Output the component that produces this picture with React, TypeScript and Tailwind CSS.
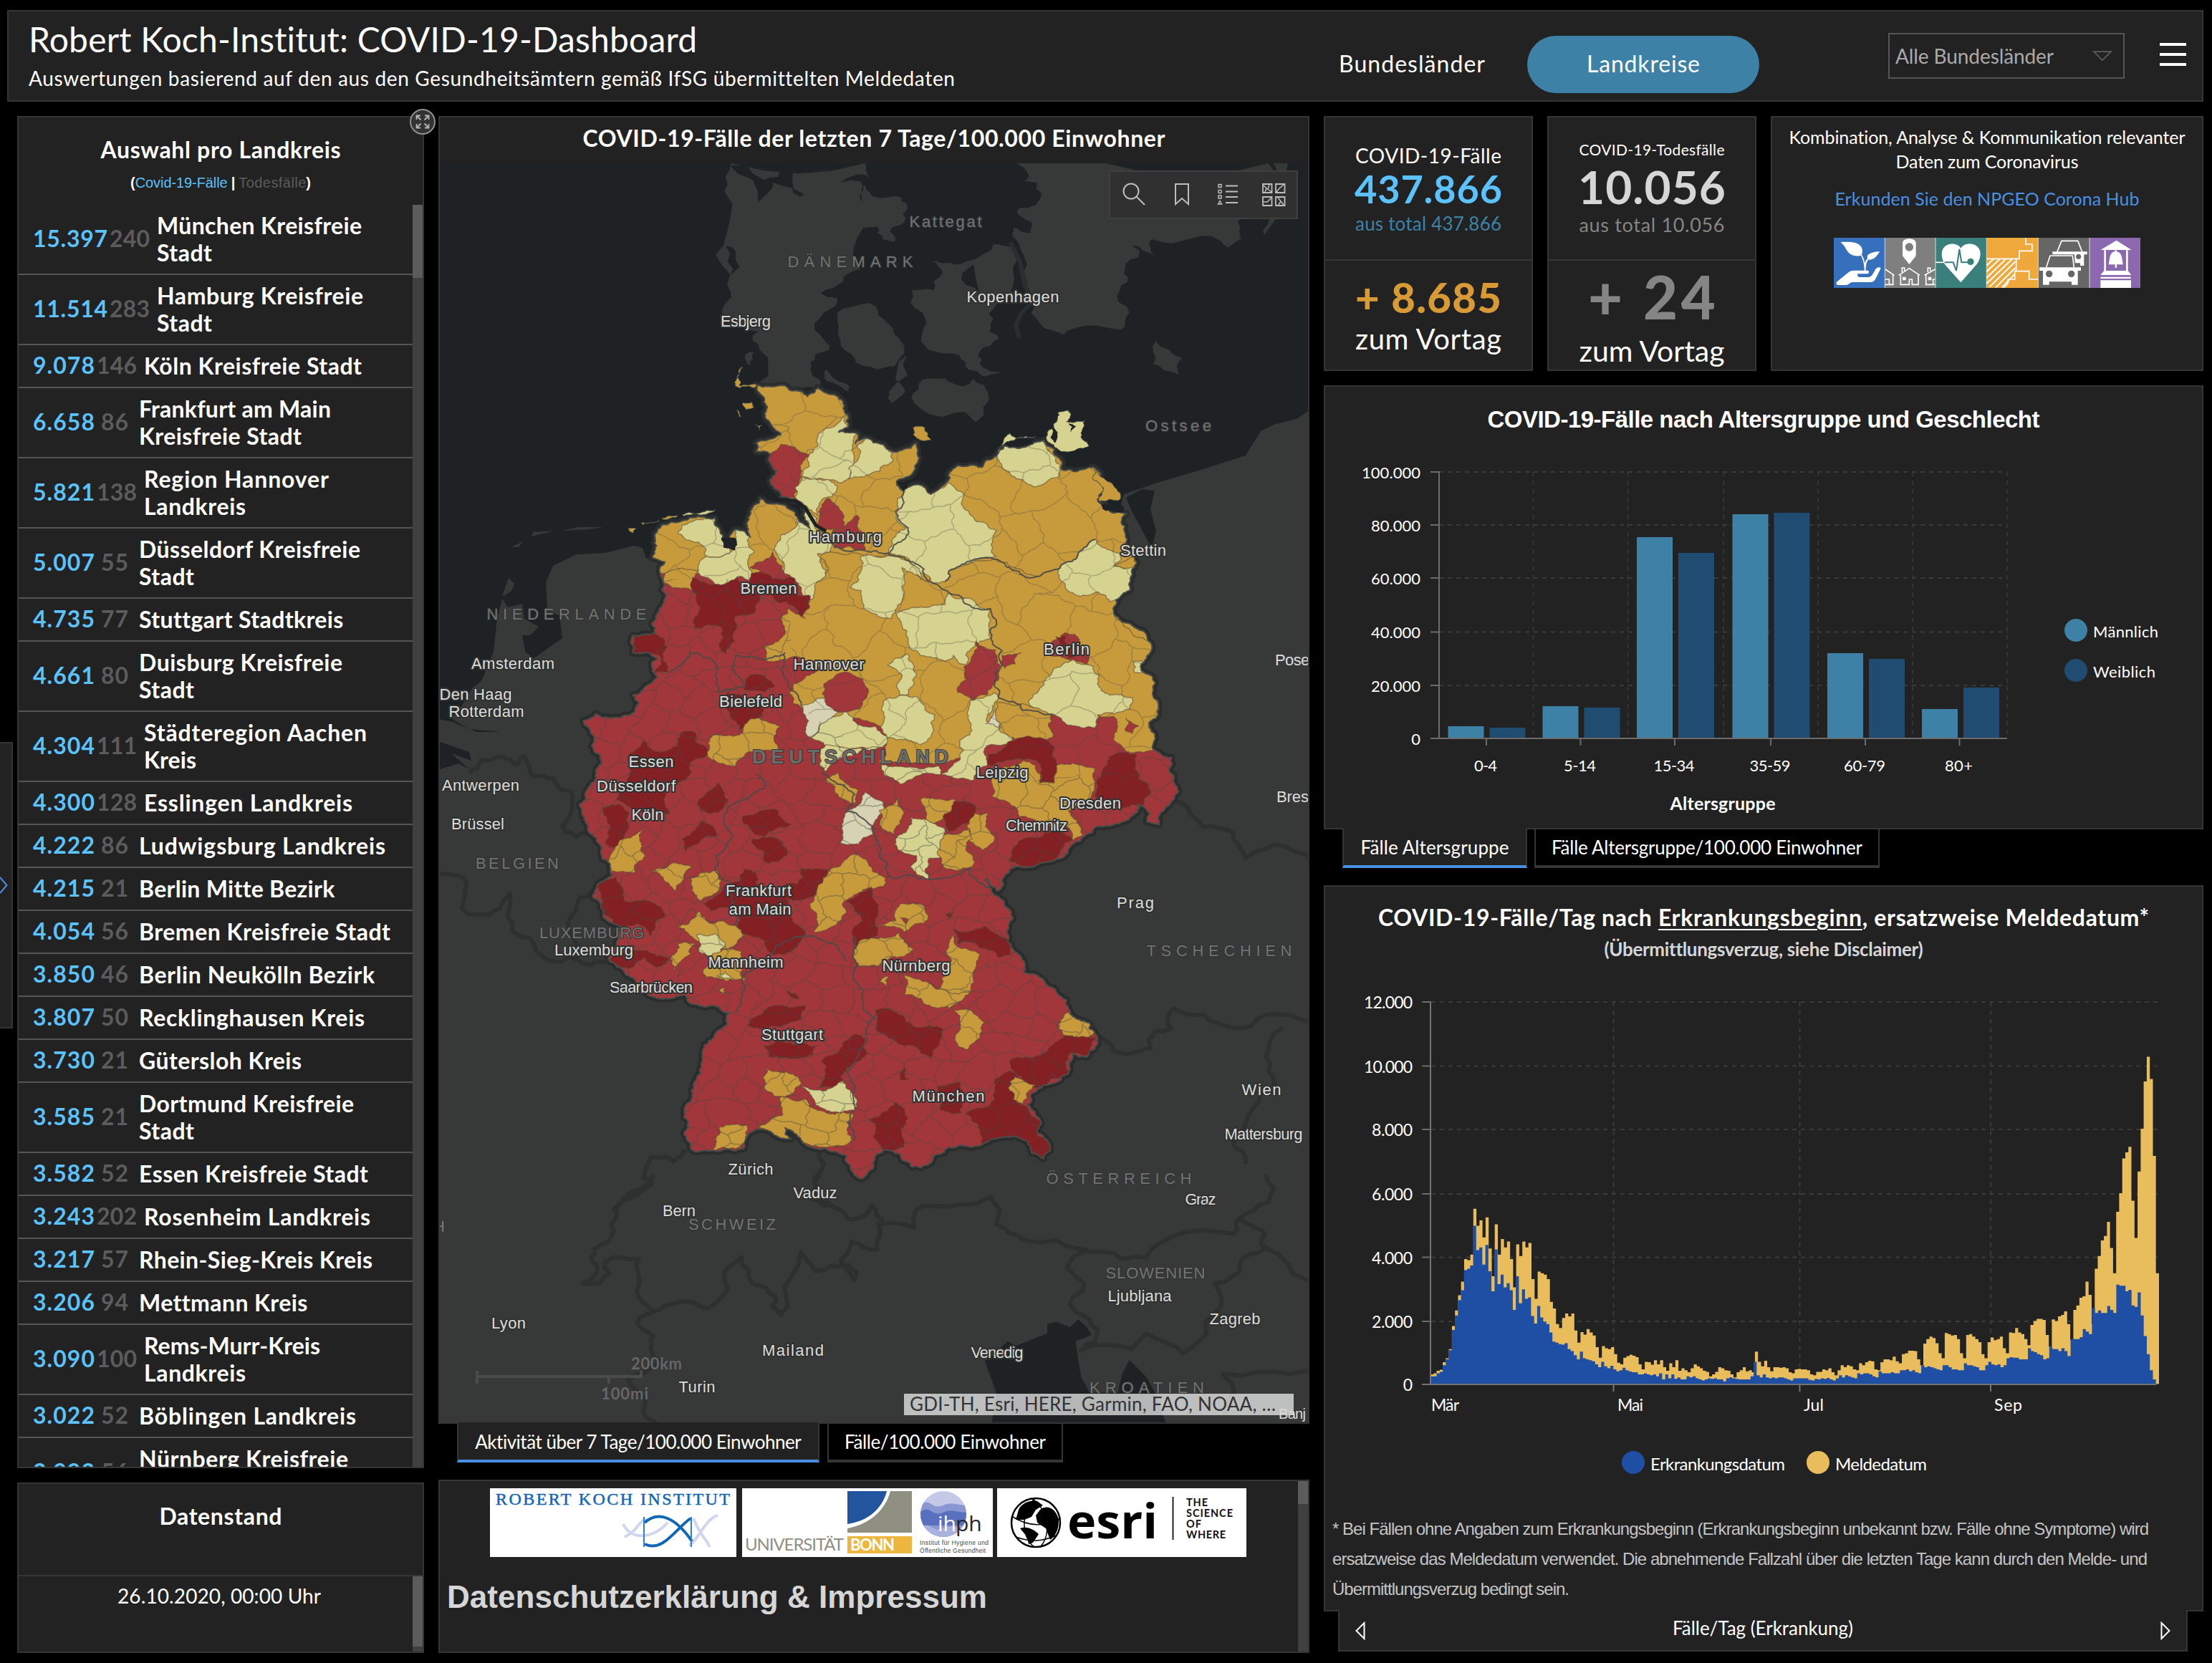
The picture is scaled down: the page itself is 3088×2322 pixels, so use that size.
import { useLayoutEffect, useRef, type ReactNode } from "react";

/* ---------- text helpers ---------- */

// Spreads a single line of text evenly over a given width.
function Line({ w, className = "", children }: { w: number; className?: string; children: ReactNode }) {
  const ref = useRef<HTMLSpanElement>(null);
  useLayoutEffect(() => {
    const el = ref.current;
    if (!el) return;
    el.style.letterSpacing = "0px";
    el.style.marginRight = "0px";
    const n = (el.textContent || "").length;
    const step = (w - el.getBoundingClientRect().width) / Math.max(1, n - 1);
    el.style.letterSpacing = `${step}px`;
    el.style.marginRight = `${-step}px`;
  }, [w]);
  return (
    <span ref={ref} className={`inline-block whitespace-nowrap ${className}`}>
      {children}
    </span>
  );
}

/* ---------- left list ---------- */

type Row = [string, string, [string, number][]];
const rows: Row[] = [
  ["15.397", "240", [["München Kreisfreie", 286], ["Stadt", 77]]],
  ["11.514", "283", [["Hamburg Kreisfreie", 288], ["Stadt", 77]]],
  ["9.078", "146", [["Köln Kreisfreie Stadt", 304]]],
  ["6.658", "86", [["Frankfurt am Main", 268], ["Kreisfreie Stadt", 227]]],
  ["5.821", "138", [["Region Hannover", 258], ["Landkreis", 142]]],
  ["5.007", "55", [["Düsseldorf Kreisfreie", 309], ["Stadt", 77]]],
  ["4.735", "77", [["Stuttgart Stadtkreis", 284]]],
  ["4.661", "80", [["Duisburg Kreisfreie", 284], ["Stadt", 77]]],
  ["4.304", "111", [["Städteregion Aachen", 311], ["Kreis", 73]]],
  ["4.300", "128", [["Esslingen Landkreis", 291]]],
  ["4.222", "86", [["Ludwigsburg Landkreis", 344]]],
  ["4.215", "21", [["Berlin Mitte Bezirk", 272]]],
  ["4.054", "56", [["Bremen Kreisfreie Stadt", 351]]],
  ["3.850", "46", [["Berlin Neukölln Bezirk", 329]]],
  ["3.807", "50", [["Recklinghausen Kreis", 315]]],
  ["3.730", "21", [["Gütersloh Kreis", 227]]],
  ["3.585", "21", [["Dortmund Kreisfreie", 300], ["Stadt", 77]]],
  ["3.582", "52", [["Essen Kreisfreie Stadt", 320]]],
  ["3.243", "202", [["Rosenheim Landkreis", 316]]],
  ["3.217", "57", [["Rhein-Sieg-Kreis Kreis", 326]]],
  ["3.206", "94", [["Mettmann Kreis", 234]]],
  ["3.090", "100", [["Rems-Murr-Kreis", 246], ["Landkreis", 142]]],
  ["3.022", "52", [["Böblingen Landkreis", 303]]],
  ["2.993", "56", [["Nürnberg Kreisfreie", 292], ["Stadt", 77]]],
];

function ListRow({ row }: { row: Row }) {
  const [cases, deaths, name] = row;
  const long = cases.length > 5;
  const three = deaths.length > 2;
  return (
    <li className="flex items-center border-b-2 border-[#555] py-[10px] pl-[20px] text-[32px] leading-[38px] font-bold">
      <span className="-my-[2px] flex pb-[2px]">
        <Line w={long ? 104 : 86} className="text-[#5bc2fb]">{cases}</Line>
        <span className={three ? "ml-[3px] flex" : "ml-[9px] flex"}>
          <Line w={three ? 56 : 38} className="text-[#5c5c5c]">{deaths}</Line>
        </span>
      </span>
      <span className={three ? "ml-[10px] flex flex-col items-start" : "ml-[15px] flex flex-col items-start"}>
        {name.map(([t, w]) => (
          <Line key={t} w={w}>{t}</Line>
        ))}
      </span>
    </li>
  );
}

/* ---------- map ---------- */

type Pt = [number, number];
const parse = (s: string, dy = 0): Pt[] => s.trim().split(/\s+/).map((p) => {
  const [x, y] = p.split(",").map(Number);
  return [x, y + dy];
});

const noise = (a: number, b: number) => {
  const v = Math.sin(a * 12.9898 + b * 78.233) * 43758.5453;
  return v - Math.floor(v) - 0.5;
};

// Midpoint displacement gives straight segments a coastline-like look.
function jag(a: Pt, b: Pt, depth: number): Pt[] {
  const dx = b[0] - a[0];
  const dy = b[1] - a[1];
  if (depth === 0 || Math.hypot(dx, dy) < 9) return [a];
  const k = noise(a[0] + b[0], a[1] + b[1]) * 0.36 * (a[0] + a[1] < b[0] + b[1] ? 1 : -1);
  const m: Pt = [(a[0] + b[0]) / 2 - dy * k, (a[1] + b[1]) / 2 + dx * k];
  return [...jag(a, m, depth - 1), ...jag(m, b, depth - 1)];
}

const toPath = (out: Pt[], closed: boolean) =>
  "M" + out.map((p) => `${p[0].toFixed(1)},${p[1].toFixed(1)}`).join("L") + (closed ? "Z" : "");

function shape(pts: Pt[], closed = true, depth = 4) {
  const out: Pt[] = [];
  const n = closed ? pts.length : pts.length - 1;
  for (let i = 0; i < n; i++) out.push(...jag(pts[i], pts[(i + 1) % pts.length], depth));
  if (!closed) out.push(pts[pts.length - 1]);
  return toPath(out, closed);
}

const SOUTH = 1467;

const germany: Pt[] = [
  ...parse("480,95 550,97 560,112 590,118 605,135 630,105 690,150 695,190 703,200 703,245 680,262 725,265 722,300 745,282 790,305 812,330 835,325 870,300 873,370 845,420 822,435 838,470 850,455 885,450 905,480 930,455 960,390 1030,385 1065,345 1085,310 1180,290 1220,360 1225,395 1260,400 1300,385 1320,440 1310,500 1345,545 1380,550 1385,670 1400,700 1400,740 1390,820 1355,855 1350,900 1400,950 1435,1000 1430,1060 1415,1090 1445,1130 1447,1200 1435,1290 1450,1330 1450,1385 1490,1410 1497,1480"),
  ...parse("1490,100 1460,180 1430,170 1425,120 1410,110 1395,150 1350,180 1280,220 1250,250 1200,310 1150,330 1100,335 1080,370 1065,415 1040,370 1060,430 1105,510 1090,560 1105,620 1130,700 1180,730 1240,830 1290,880 1305,920 1305,970 1285,1000 1250,990 1240,1060 1180,1100 1150,1130 1140,1170 1170,1220 1165,1270 1190,1300 1180,1360 1150,1340 1140,1300 1080,1285 1030,1310 950,1320 900,1380 860,1390 830,1345 790,1330 770,1350 765,1395 740,1430 700,1350 650,1325 590,1295 550,1250 565,1290 520,1270 480,1255 455,1290 450,1325 370,1332 330,1335 310,1290 315,1230 320,1160 335,1080 350,980 385,910 415,845 380,820 330,815 305,780 270,795 235,790 190,740 160,700 125,665 140,610 150,540 110,510 85,440 95,390 130,360 125,330 105,300 100,250 75,210 65,170 50,110 65,93", SOUTH),
  ...parse("80,1500 90,1460 100,1400 80,1370 75,1310 60,1280 90,1255 130,1270 185,1250 195,1220 180,1190 240,1125 230,1110 240,1060 220,1040 180,1040 180,980 235,970 240,900 258,850 258,720 228,705 235,620 250,590 300,575 380,565 390,600 400,640 420,660 430,605 465,630 462,560 490,495 520,515 575,545 610,600 600,540 580,505 540,490 515,440 530,400 515,370 515,340 480,330 480,300 540,270 510,220 500,150"),
];

const ORANGE = "#c79b3c";
const YELLOW = "#d6d28f";
const RED = "#a1373b";
const DARK = "#822024";
const BEIGE = "#d7d2b4";
const SEA = "#1e2225";

const north: [string, string][] = [
  [RED, "540,305 575,315 610,345 590,420 575,495 540,490 515,440 530,400 515,370 515,340"],
  [YELLOW, "630,280 665,245 700,200 703,245 680,262 725,265 715,320 720,390 690,440 640,425 590,415 610,340 630,310"],
  [YELLOW, "745,282 790,305 812,335 812,365 780,400 740,420 705,425 705,390 720,370 725,310"],
  [YELLOW, "590,420 670,440 665,490 640,500 630,555 600,520 575,490"],
  [YELLOW, "545,505 580,500 600,530 630,610 665,660 640,700 650,770 640,860 610,860 590,810 545,760 530,690 540,625 575,600 583,560"],
  [RED, "635,560 655,495 690,545 695,600 640,610"],
  [RED, "665,610 725,555 732,610 745,680 670,670"],
  [YELLOW, "290,620 300,590 350,570 385,565 400,640 415,690 360,700 340,650"],
  [YELLOW, "360,700 415,690 430,605 465,630 462,740 480,790 440,770 395,805 340,760"],
  [ORANGE, "258,760 340,750 325,820 258,795"],
  [ORANGE, "630,690 795,695 850,720 900,790 1060,710 1170,770 1215,745 1400,700 1390,820 1355,855 1350,900 1435,1000 1430,1060 1415,1090 1445,1130 1447,1200 1435,1290 1450,1380 1380,1390 1350,1350 1350,1265 1200,1260 1200,1340 1070,1320 960,1420 860,1430 780,1430 780,1300 740,1280 570,1220 570,1150 640,1100 590,1060 500,1065 500,1020 550,960 560,880 600,920 610,860 650,770"],
  [YELLOW, "1065,345 1085,310 1180,290 1220,380 1215,420 1155,455 1130,430 1080,390"],
  [YELLOW, "825,495 850,455 885,450 905,480 950,440 985,480 985,530 1065,610 1065,700 1025,705 950,750 940,790 905,790 840,700 800,690 810,650 845,600 820,540"],
  [YELLOW, "735,700 830,705 880,780 835,740 840,780 835,860 810,920 760,900 735,820 710,810 735,750"],
  [YELLOW, "820,900 860,880 940,870 945,830 1050,890 1050,990 1010,1020 990,1085 960,1050 940,1070 880,1050 850,990"],
  [RED, "1015,1000 1062,1030 1060,1150 1005,1210 970,1180 985,1090"],
  [RED, "1078,1050 1125,1040 1110,1080 1085,1095"],
  [RED, "1200,1000 1230,970 1255,975 1290,1050 1285,1080 1240,1065 1195,1050"],
  [DARK, "1210,985 1232,980 1235,1010 1260,1050 1240,1060 1220,1010"],
  [YELLOW, "1215,745 1270,680 1305,640 1365,690 1350,735 1400,740 1390,820 1340,860 1310,825 1255,835 1225,790"],
  [YELLOW, "1175,1160 1205,1095 1250,1065 1300,1090 1310,1150 1340,1190 1395,1200 1390,1240 1310,1260 1305,1305 1260,1300 1200,1255 1145,1225"],
  [YELLOW, "1400,1070 1420,1070 1420,1110 1400,1110"],
  [RED, "1380,1270 1395,1290 1410,1300 1395,1325 1378,1315"],
  [YELLOW, "800,1200 870,1195 890,1240 915,1260 910,1320 880,1365 800,1340 790,1260"],
  [YELLOW, "610,1340 640,1290 700,1240 725,1290 770,1300 800,1350 780,1375 650,1370"],
  [YELLOW, "650,1365 780,1375 720,1400 650,1460 635,1440"],
  [BEIGE, "595,1225 630,1200 680,1250 640,1290 610,1340"],
  [RED, "645,1150 690,1110 740,1135 730,1240 680,1250 650,1220"],
  [YELLOW, "800,1085 850,1045 870,1120 850,1190 830,1190 835,1120"],
  [YELLOW, "1000,1210 1060,1180 1070,1200 1040,1280 1105,1350 1040,1370 1040,1440 1010,1490 930,1470 975,1420 975,1350 1000,1330 995,1270"],
  [BEIGE, "1055,1225 1070,1305 1040,1290"],
  [ORANGE, "1065,1215 1140,1225 1200,1260 1200,1340 1110,1345 1070,1310"],
  [YELLOW, "785,1435 860,1445 925,1440 930,1470 830,1505 790,1470"],
  [DARK, "1045,1400 1110,1350 1170,1340 1205,1370 1205,1500 1170,1500 1160,1420 1100,1420 1050,1440"],
  [ORANGE, "1050,1480 1130,1420 1160,1440 1170,1500 1205,1500 1210,1440 1250,1430 1305,1450 1300,1530 1240,1600 1275,1685 1250,1705 1230,1650 1120,1620 1100,1580 1055,1550"],
  [DARK, "1305,1500 1350,1400 1405,1400 1410,1480 1440,1530 1420,1580 1370,1590 1310,1570"],
  [DARK, "325,775 385,800 435,770 490,850 480,890 430,910 430,1000 405,1045 390,1020 395,950 330,955 345,880"],
  [DARK, "180,975 235,975 265,1020 270,1110 230,1115 245,1050 180,1040"],
  [DARK, "470,760 550,780 570,775 570,830 612,840 610,880 590,915 570,875 530,860 520,835 480,830"],
  [RED, "465,740 520,685 545,750 550,780 520,780"],
  [DARK, "455,1130 500,1120 525,1160 500,1180 450,1170"],
  [DARK, "410,1180 500,1200 495,1260 440,1315 415,1260"],
  [ORANGE, "360,1390 375,1330 440,1330 485,1270 540,1300 535,1380 470,1390 430,1440 365,1410"],
  [DARK, "170,1400 205,1350 240,1390 290,1370 300,1320 330,1320 335,1360 355,1370 355,1410 320,1430 310,1490 250,1510 270,1610 200,1600 140,1560 170,1480"],
  [DARK, "385,1500 415,1560 370,1610 340,1580"],
];

const south: [string, string][] = [
  [DARK, "105,120 150,110 170,180 155,260 115,250"],
  [ORANGE, "125,290 160,230 205,200 210,290 185,350 125,345"],
  [DARK, "350,160 385,220 350,230 310,275 300,230"],
  [DARK, "445,150 520,125 565,180 500,225"],
  [DARK, "470,230 530,230 555,290 510,320"],
  [DARK, "90,400 140,365 160,450 220,450 260,500 225,585 190,530 130,540 95,480"],
  [ORANGE, "225,345 280,315 325,330 305,370 285,415"],
  [ORANGE, "320,370 385,340 395,380 345,450"],
  [DARK, "350,460 400,400 440,380 450,335 480,350 480,390 580,390 590,335 655,340 640,410 605,440 550,440 560,500 600,560 545,640 520,640 500,590 440,560 435,480 370,485"],
  [ORANGE, "290,540 340,485 375,530 400,520 450,570 410,620 335,590"],
  [YELLOW, "335,570 380,565 405,610 365,650 340,625"],
  [ORANGE, "290,600 330,600 320,640 280,700 272,650"],
  [ORANGE, "400,620 445,630 455,730 360,720"],
  [YELLOW, "385,715 425,725 405,700"],
  [ORANGE, "390,765 405,755 402,778"],
  [DARK, "125,655 215,625 270,650 240,685 210,650 170,690"],
  [ORANGE, "610,460 630,400 660,340 720,285 750,310 795,370 790,400 740,410 690,460 700,490 620,560"],
  [DARK, "700,450 760,400 770,450 770,520 775,570 730,615 715,550 740,520"],
  [ORANGE, "775,540 820,520 830,460 890,470 890,530 840,560"],
  [RED, "832,510 850,515 845,535"],
  [ORANGE, "715,625 760,580 830,560 865,620 845,640 780,680 730,680"],
  [DARK, "940,500 962,492 952,518"],
  [DARK, "960,550 1040,540 1085,580 1100,640 1070,650 1040,620 970,600"],
  [ORANGE, "945,620 955,570 965,605 1025,640 1005,770 950,835 930,800 950,700"],
  [ORANGE, "840,710 900,740 1000,770 950,815 910,825 840,780"],
  [ORANGE, "780,735 800,715 798,750"],
  [ORANGE, "960,835 1000,835 1035,880 1025,920 995,975 970,960 975,880"],
  [ORANGE, "1215,900 1235,845 1270,850 1305,915 1270,940 1225,920"],
  [DARK, "1305,930 1300,1000 1250,985 1240,1060 1160,1110 1110,1060 1100,1010 1200,960 1230,925"],
  [DARK, "990,1200 1050,1170 1060,1080 1100,1050 1115,1150 1140,1180 1175,1230 1165,1280 1190,1300 1180,1360 1150,1340 1140,1300 1080,1285 1030,1310 1020,1240"],
  [ORANGE, "1110,1070 1160,1100 1130,1165 1105,1150"],
  [DARK, "920,1105 975,1090 980,1200 930,1190"],
  [DARK, "770,835 800,830 860,890 935,905 905,1010 860,960 800,930 770,900"],
  [DARK, "465,870 520,820 600,820 590,870 540,895 460,890"],
  [DARK, "500,960 560,950 630,960 620,990 510,1000"],
  [DARK, "690,950 720,920 745,935 745,1000 700,1040 690,1100 630,1110 640,1010"],
  [ORANGE, "495,1075 505,1040 570,1060 590,1090 570,1130 525,1140"],
  [ORANGE, "540,1140 600,1150 630,1190 715,1200 715,1295 650,1320 590,1295 550,1250 565,1290 520,1270 485,1245 545,1205"],
  [YELLOW, "590,1105 650,1120 690,1085 715,1130 720,1190 670,1195 620,1150"],
  [ORANGE, "370,1330 390,1250 460,1240 455,1290 430,1325"],
  [DARK, "755,1220 800,1190 820,1160 840,1320 790,1330 775,1300"],
  [DARK, "840,1030 850,1080 830,1080"],
  [DARK, "552,765 575,775 585,795 565,790"],
  [BEIGE, "685,245 705,130 725,115 745,65 790,105 770,165 730,250"],
  [ORANGE, "650,20 680,-5 730,60 720,110 680,80"],
  [ORANGE, "780,130 830,85 840,140 815,215 780,180"],
  [ORANGE, "885,85 960,90 935,160 890,180"],
  [DARK, "935,150 960,100 1010,110 1000,170 950,205"],
  [ORANGE, "1010,140 1045,140 1060,230 1030,270 1000,240"],
  [YELLOW, "820,230 855,155 890,160 940,200 945,290 900,300 895,375 855,330 870,290 825,270"],
  [ORANGE, "940,215 1000,195 1005,330 935,330"],
  [DARK, "1130,230 1200,205 1250,235 1200,310 1150,330 1095,310"],
];

// Islands and spits off the German coast.
const islands: [string, string][] = [
  [ORANGE, "862,245 890,245 905,290 880,290 862,270"],
  [YELLOW, "1215,190 1240,185 1235,225 1280,220 1270,265 1290,310 1245,330 1222,330 1195,300 1205,230"],
  [YELLOW, "1070,335 1098,265 1112,282 1160,278 1090,295"],
  [ORANGE, "1300,385 1330,430 1365,475 1365,500 1315,505 1325,460 1300,430"],
  [ORANGE, "430,100 448,32 440,98 480,92 480,102 440,106"],
  [ORANGE, "447,158 470,155 475,175 455,182"],
  [ORANGE, "478,235 494,238 488,255"],
  [ORANGE, "432,182 444,208 438,205"],
  [ORANGE, "168,600 188,602 180,618"],
  [ORANGE, "200,582 245,572 242,578 205,588"],
  [ORANGE, "250,566 290,556 285,563 255,570"],
  [YELLOW, "300,552 380,535 378,541 305,558"],
];

const seaInlets = [
  "395,635 432,640 428,680 400,668",
  "1310,505 1370,520 1370,545 1330,540",
  "1235,340 1290,315 1290,385 1250,380",
  "1085,300 1160,285 1150,300 1095,312",
  "820,435 850,455 838,470",
  "1196,240 1212,260 1206,300 1196,280",
  "1240,228 1258,240 1246,262",
];

// Honeycomb of irregular cells standing for the district borders.
function districts(size: number, height: number, spread: number) {
  const vertex = (x: number, y: number): Pt => {
    const rx = Math.round(x);
    const ry = Math.round(y);
    return [x + noise(rx * 0.37, ry * 0.73) * spread, y + noise(rx * 0.91 + 5, ry * 0.29) * spread * 1.3];
  };
  const d: string[] = [];
  for (let row = 0; row * height * 0.75 < 2950; row++) {
    for (let col = 0; col * size < 1560; col++) {
      const cx = col * size + (row % 2) * (size / 2);
      const cy = row * height * 0.75;
      const a = vertex(cx - size / 2, cy - height / 4);
      const b = vertex(cx, cy - height / 2);
      const c = vertex(cx + size / 2, cy - height / 4);
      const e = vertex(cx + size / 2, cy + height / 4);
      d.push(shape([a, b, c, e], false, 3));
    }
  }
  return d.join("");
}

const denmark = [
  "532,172 520,270 519,460 525,600 516,690 545,740 580,765 582,830 578,950 620,965 690,965 690,940 672,900 680,850 705,830 690,780 695,700 720,650 690,630 730,590 760,545 765,400 790,395 800,440 820,450 815,400 838,380 843,320 830,290 785,290 770,260 775,220 768,172",
  "720,700 775,665 800,720 828,790 820,890 790,900 750,860 725,800",
  "850,620 890,620 905,560 885,515 930,530 945,520 995,458 1030,470 1035,520 1030,600 1035,640 1000,670 990,740 1005,790 970,840 975,890 1010,910 980,925 950,900 935,850 880,830 870,700",
  "850,1000 870,935 910,930 940,960 960,935 985,980 965,1085 945,1050 905,1068",
  "842,850 835,960 815,1020 810,980",
  "700,900 735,950 740,980 700,940",
  "1036,172 1050,235 1072,240 1070,320 1040,330 1062,380 1060,418 1030,400 1028,420 1042,470 1055,590 1070,660 1078,740 1120,778 1160,745 1220,760 1235,700 1218,620 1225,560 1250,505 1240,460 1280,500 1275,440 1320,450 1380,430 1410,470 1430,400 1430,369 1470,340 1480,172",
  "1490,172 1515,172 1480,380 1473,425",
  "1282,800 1328,860 1322,918 1277,880",
  "562,840 572,840 566,885 560,880",
];
const fjords = [
  "530,180 570,230 580,310 600,270 605,240 640,260 655,290 660,280 640,240 640,172 630,172 615,220 590,230 560,180",
  "725,240 755,212 772,215 770,245 762,260 765,315 758,290 760,235",
  "522,462 540,485 547,540 530,570 526,520",
  "795,560 806,500 812,560 803,602",
  "940,560 960,530 970,630 945,600",
];
const continent = "612,1075 640,1066 655,1074 630,1052 658,1062 655,1050 612,1035 612,1018 640,1020 660,1022 700,1022 655,1018 630,1003 645,985 660,960 672,951 689,910 694,864 701,836 709,848 729,843 732,864 752,875 740,887 729,887 733,910 745,919 765,905 785,891 781,859 764,854 762,813 772,790 805,774 845,772 885,762 897,765 902,779 925,788 960,860 1000,900 1200,1000 1450,950 1520,850 1560,720 1569,690 1616,674 1680,655 1739,636 1760,602 1778,593 1810,585 1840,565 1840,2000 600,2000 600,1075";

const borders8 = [
  "395,0 370,60 325,110 325,180 290,240 295,290 270,350 300,350 310,280 330,265 370,270 370,350 395,440 370,460 395,520 390,560 410,600 350,660 380,720 400,795",
  "395,440 440,410 490,430 520,340 550,265 570,350 610,390 620,450 630,400 655,250 680,310 740,290 750,340 745,215 790,240 790,150",
  "690,0 675,80 720,110 745,145 780,100 800,160 855,170 870,100 960,95 990,70 1000,160 1050,210 1150,240 1220,270 1265,270 1310,200 1420,190 1430,140 1480,90 1475,0",
  "1160,245 1125,300 1155,350 1140,440 1180,500 1150,565 1240,560 1265,510 1330,575 1390,440 1385,350 1430,290 1475,235 1550,340",
  "1475,235 1470,180 1430,140",
  "1550,630 1520,640 1400,640 1420,700 1400,770",
];
const borders7 = [
  "1305,920 1350,980 1390,990 1440,970 1450,910 1490,900 1495,830 1568,850 1660,900 1740,850 1830,880",
  "1490,100 1530,120 1568,190 1640,210 1670,300 1740,250 1830,310",
  "310,1330 280,1370 225,1355 205,1430 225,1440 135,1550",
  "600,1290 645,1380 625,1490 680,1540",
  "1760,900 1720,1000 1740,1100 1690,1180 1640,1300 1670,1380",
];
const borders12 = [
  "130,870 180,830 270,820 330,845 360,820 400,880 480,885 560,930 555,990 520,1030 530,1050 620,1050",
  "6,1175 80,1180 120,1210 100,1280 210,1300 260,1280 300,1235 290,1300 310,1350 400,1390 470,1440 560,1430 610,1450 700,1445",
  "575,1430 580,1400 550,1350 545,1320 590,1250 650,1235",
];
const stateBorders = [
  "640,1467 720,1540 700,1600 780,1750 800,1830 900,1840 1000,1800 1060,1880",
  "720,2040 725,2140 720,2200 740,2270 770,2330 745,2420 700,2520 720,2640 718,2760",
  "430,2310 445,2200 520,2100 600,2040 650,2060 700,2130",
  "270,1110 320,1040 370,1060 390,1180 450,1160 430,1050 500,1065 550,1040 545,1120 590,1230",
  "480,1467 500,1520 400,1620 410,1720 380,1800 420,1900 430,2000",
  "800,690 850,715 905,790 950,830 1050,885 1055,1000 1060,1150 1070,1200 1200,1260",
  "940,790 950,750 1060,710 1100,745 1170,770 1215,745 1270,680 1305,640",
  "640,610 680,670 745,680 800,690 850,600 820,540 838,470",
];

type Label = [string, number, number, number, "c" | "g" | "d"];
const labels: Label[] = [
  ["Kattegat", 1320, 317, 101, "g"], ["DÄNEMARK", 1187, 373, 175, "g"], ["Kopenhagen", 1414, 422, 129, "c"],
  ["Esbjerg", 1041, 456, 70, "c"], ["Ostsee", 1645, 602, 92, "g"], ["Hamburg", 1180, 757, 102, "c"],
  ["Stettin", 1596, 776, 64, "c"], ["Bremen", 1073, 829, 79, "c"], ["NIEDERLANDE", 791, 865, 223, "g"],
  ["Amsterdam", 716, 934, 116, "c"], ["Den Haag", 664, 977, 101, "c"], ["Rotterdam", 679, 1001, 105, "c"],
  ["Hannover", 1157, 935, 99, "c"], ["Berlin", 1489, 914, 64, "c"], ["Bielefeld", 1048, 987, 88, "c"],
  ["Essen", 909, 1071, 63, "c"], ["Antwerpen", 671, 1104, 108, "c"], ["Düsseldorf", 888, 1105, 110, "c"],
  ["DEUTSCHLAND", 1187, 1066, 274, "d"], ["Leipzig", 1399, 1086, 73, "c"], ["Dresden", 1522, 1129, 86, "c"],
  ["Köln", 904, 1145, 45, "c"], ["Brüssel", 667, 1158, 74, "c"], ["BELGIEN", 722, 1213, 116, "g"],
  ["Chemnitz", 1447, 1160, 86, "c"], ["Frankfurt", 1059, 1251, 92, "c"], ["am Main", 1061, 1277, 87, "c"],
  ["Prag", 1585, 1268, 52, "c"], ["LUXEMBURG", 826, 1310, 146, "g"], ["Luxemburg", 829, 1334, 110, "c"],
  ["TSCHECHIEN", 1702, 1335, 203, "g"], ["Mannheim", 1041, 1351, 105, "c"], ["Nürnberg", 1279, 1356, 95, "c"],
  ["Saarbrücken", 909, 1386, 116, "c"], ["Stuttgart", 1106, 1452, 86, "c"], ["Wien", 1761, 1529, 55, "c"],
  ["München", 1324, 1538, 101, "c"], ["Mattersburg", 1764, 1591, 109, "c"], ["Zürich", 1048, 1640, 63, "c"],
  ["ÖSTERREICH", 1562, 1653, 203, "g"], ["Vaduz", 1138, 1673, 61, "c"], ["Graz", 1676, 1682, 43, "c"],
  ["Bern", 948, 1698, 46, "c"], ["SCHWEIZ", 1022, 1717, 122, "g"], ["SLOWENIEN", 1613, 1785, 139, "g"],
  ["Ljubljana", 1591, 1817, 89, "c"], ["Zagreb", 1724, 1849, 71, "c"], ["Lyon", 710, 1855, 48, "c"],
  ["Mailand", 1107, 1893, 86, "c"], ["Venedig", 1392, 1896, 73, "c"], ["Turin", 973, 1944, 51, "c"],
  ["KROATIEN", 1601, 1945, 160, "g"],
];

function MapView() {
  const d = shape(germany);
  return (
    <svg className="block h-[1758px] w-[1212px]" viewBox="614 228 1212 1758" fontFamily="'Liberation Sans', Arial, sans-serif">
      <defs>
        <clipPath id="country"><path d={d} /></clipPath>
        <clipPath id="dense"><path d="M0 780H560L570 1220L780 1420L1000 1500H1200L1500 1380L1600 1400V3000H0Z" /></clipPath>
        <clipPath id="sparse"><path d="M0 0H1600V1400L1500 1380L1200 1500H1000L780 1420L570 1220L560 780H0Z" /></clipPath>
      </defs>
      <rect x="614" y="228" width="1212" height="1758" fill={SEA} />
      <g fill="#373938">
        <path d={toPath(parse(continent), true)} />
        <path d="M742,749l32,-8l-30,2zM783,741l40,-2l20,-3l-35,0zM702,829l8,-22l8,8l-4,10l-12,8zM714,764l16,-8l-6,8zM612,1004l20,4l38,16l-30,14l-28,-10z" />
        <g transform="translate(600 160) scale(.7908 .3954)">
          {denmark.map((p) => <path key={p} d={shape(parse(p), true, 2)} />)}
          <g fill={SEA}>{fjords.map((p) => <path key={p} d={shape(parse(p), true, 1)} />)}</g>
          <path d="M1025,452L1042,520L1050,600L1065,660L1045,700L1035,740L1040,790" fill="none" stroke="#2b2d2e" strokeWidth="8" />
        </g>
      </g>
      <path d="M1572,695l22,-12l18,2l-6,26l8,30l-6,25l-18,-34l-10,-18z" fill={SEA} />
      <g transform="translate(600 1640) scale(.7908 .435)">
        <path fill={SEA} d={toPath(parse("980,600 1000,570 1020,535 1035,550 1062,530 1090,510 1090,480 1105,472 1130,490 1145,465 1160,490 1168,515 1140,535 1145,600 1150,650 1165,700 1215,700 1222,640 1235,595 1265,650 1280,700 1300,800 1240,800 1160,800 992,800 1000,700"), true)} />
      </g>
      <g fill="none" stroke="#2e302f" strokeWidth="6" strokeLinejoin="round">
        <g transform="translate(600 1640) scale(.7908 .435)">
          {borders8.map((p) => <path key={p} vectorEffect="non-scaling-stroke" d={shape(parse(p), false, 2)} />)}
        </g>
        <g transform="translate(780 1080) scale(.574 .3954)">
          {borders7.map((p) => <path key={p} vectorEffect="non-scaling-stroke" d={shape(parse(p), false, 2)} />)}
        </g>
        <g transform="translate(612 680) scale(.3333 .4592)">
          {borders12.map((p) => <path key={p} vectorEffect="non-scaling-stroke" d={shape(parse(p), false, 2)} />)}
        </g>
      </g>
      <g transform="translate(780 500) scale(.574 .3954)">
        <path d={d} fill="none" stroke="#2b2d2d" strokeWidth="10" strokeLinejoin="round" vectorEffect="non-scaling-stroke" />
        <path d={d} fill={RED} />
        <g clipPath="url(#country)">
          <path d="M150 50H1520V760H1500V1100H640V760H150Z" fill={ORANGE} />
          {north.map(([c, p]) => (
            <path key={p} d={shape(parse(p))} fill={c} stroke="#5c4a35" strokeOpacity=".55" strokeWidth="1.5" vectorEffect="non-scaling-stroke" />
          ))}
          {south.map(([c, p]) => (
            <path key={p} d={shape(parse(p, SOUTH))} fill={c} stroke="#5c4a35" strokeOpacity=".55" strokeWidth="1.5" vectorEffect="non-scaling-stroke" />
          ))}
          <g fill="none" stroke="#4a4a44" strokeWidth="1.5">
            <g clipPath="url(#dense)"><path d={districts(76, 108, 40)} strokeOpacity=".42" vectorEffect="non-scaling-stroke" /></g>
            <g clipPath="url(#sparse)"><path d={districts(118, 158, 62)} strokeOpacity=".3" vectorEffect="non-scaling-stroke" /></g>
          </g>
          {stateBorders.map((p) => (
            <path key={p} d={shape(parse(p), false)} fill="none" stroke="#4a4a48" strokeOpacity=".9" strokeWidth="2" vectorEffect="non-scaling-stroke" />
          ))}
        </g>
        <path d={d} fill="none" stroke="#4a4c48" strokeWidth="2" vectorEffect="non-scaling-stroke" />
        {islands.map(([c, p]) => (
          <path key={p} d={shape(parse(p))} fill={c} stroke="#4a4c48" strokeWidth="1" vectorEffect="non-scaling-stroke" />
        ))}
        {seaInlets.map((p) => <path key={p} d={shape(parse(p))} fill={SEA} />)}
        <path d="M520,500L575,503L600,530L625,590L650,612" fill="none" stroke={SEA} strokeWidth="5" vectorEffect="non-scaling-stroke" />
      </g>

      <g textAnchor="middle" fontSize="22">
        {labels.map(([t, x, y, w, k]) => (
          <text
            key={t}
            x={x}
            y={y}
            textLength={w}
            lengthAdjust="spacing"
            fontSize={k === "d" ? 27 : 22}
            fontWeight={k === "d" ? 700 : 400}
            fill={k === "c" ? "#dcdcd8" : k === "g" ? "#727473" : "#6d6c69"}
            stroke={k === "d" ? "#3a3836" : "#303231"}
            strokeWidth={k === "c" ? 4 : 2}
            strokeLinejoin="round"
            paintOrder="stroke"
          >
            {t}
          </text>
        ))}
        <text x="1780" y="929" textAnchor="start" textLength="60" fill="#dcdcd8">Posen</text>
        <text x="1782" y="1120" textAnchor="start" textLength="74" fill="#dcdcd8">Breslau</text>
        <text x="605" y="1720" textAnchor="start" fill="#767877">H</text>
      </g>

      <path d="M666,1914V1932M666,1922H895M895,1914V1924M850,1924V1932" fill="none" stroke="#4b4b4b" strokeWidth="4" />
      <g fill="#666" fontSize="22" fontWeight="700" fontFamily="Lato, sans-serif">
        <text x="881" y="1912" textLength="71">200km</text>
        <text x="839" y="1954" textLength="66">100mi</text>
      </g>
      <rect x="1262" y="1946" width="544" height="30" fill="#fff" fillOpacity=".68" />
      <text x="1270" y="1970" textLength="511" fontSize="26" fill="#333" fontFamily="Lato, sans-serif">GDI-TH, Esri, HERE, Garmin, FAO, NOAA, …</text>
      <text x="1785" y="1981" textLength="38" fontSize="20" fill="#dcdcd8">Banj</text>

      <rect x="1549" y="239" width="262" height="66" fill="#303030" stroke="#3f3f3f" strokeWidth="2" />
      <g fill="none" stroke="#bdbdbd" strokeWidth="2">
        <circle cx="1579" cy="267" r="10.5" />
        <path d="M1586.500 274.500L1598 286" />
        <path d="M1641 257H1659V285L1650 277L1641 285Z" />
        <path d="M1711 259.500H1728M1711 267.500H1728M1711 275H1728M1711 283H1728" />
        <path d="M1701 257.500h4v4h-4zM1701 273h4v4h-4zM1700.500 285L1703 280.500L1705.500 285Z" strokeWidth="1.500" />
        <circle cx="1703" cy="267.500" r="2.200" strokeWidth="1.500" />
        <path d="M1763 257h12.500v12h-12.500zM1781 257h12.500v12h-12.500zM1763 275h12.500v12h-12.500zM1781 275h12.500v12h-12.500z" strokeWidth="1.800" />
        <path d="M1764 259L1768 263L1766 268M1768 263L1775 268M1772 258L1770 264M1782 268L1786 263L1792 258M1764 282H1769L1775 276M1784 276L1788 281L1785 286M1788 281L1792 286" strokeWidth="1.500" />
      </g>
    </svg>
  );
}

/* ---------- charts ---------- */

const ages: [string, number, number, number][] = [
  ["0-4", 2021.5, 1014, 1016],
  ["5-14", 2153.5, 986, 988],
  ["15-34", 2285, 750, 772],
  ["35-59", 2418.5, 718, 716],
  ["60-79", 2551, 912, 920],
  ["80+", 2683, 990, 960],
];
const ageLabelWidths = [32, 45, 57, 57, 58, 39];

function AgeChart() {
  return (
    <svg className="block h-[516px] w-[1224px]" viewBox="1850 640 1224 516" fontFamily="Lato, sans-serif" fill="#fff" fontSize="22">
      <g stroke="#3a3a3a" strokeWidth="2" strokeDasharray="6 6">
        {[659, 733, 807, 882.5, 957].map((y) => <path key={y} d={`M2009 ${y}H2802`} />)}
      </g>
      <g stroke="#343434" strokeWidth="2" strokeDasharray="6 6">
        {[2140.5, 2272.5, 2406, 2538, 2670, 2802].map((x) => <path key={x} d={`M${x} 659V1031`} />)}
      </g>
      {ages.map(([l, x, m, f]) => (
        <g key={l}>
          <rect x={x} y={m} width="50" height={1031 - m} fill="#3d82a6" />
          <rect x={x + 58} y={f} width="50" height={1031 - f} fill="#1f4c70" />
        </g>
      ))}
      <path d="M2009 658V1032M1997 659H2009M1997 733H2009M1997 807H2009M1997 882.500H2009M1997 957H2009M1997 1031H2802" fill="none" stroke="#6c6c6c" strokeWidth="2" />
      {[2075, 2206.5, 2338, 2472, 2604, 2735.5].map((x, i) => (
        <g key={x}>
          <path d={`M${x} 1031V1041`} stroke="#6c6c6c" strokeWidth="2" />
          <text x={x - 1} y="1077" textAnchor="middle" textLength={ageLabelWidths[i]}>{ages[i][0]}</text>
        </g>
      ))}
      <g textAnchor="end">
        <text x="1983" y="668" textLength="82">100.000</text>
        <text x="1983" y="742" textLength="69">80.000</text>
        <text x="1983" y="816" textLength="69">60.000</text>
        <text x="1983" y="891" textLength="69">40.000</text>
        <text x="1983" y="966" textLength="69">20.000</text>
        <text x="1983" y="1040">0</text>
      </g>
      <text x="2405" y="1131" textAnchor="middle" fontSize="25" fontWeight="700" textLength="147">Altersgruppe</text>
      <circle cx="2898" cy="880" r="16" fill="#3d82a6" />
      <circle cx="2898" cy="936" r="16" fill="#1f4c70" />
      <text x="2922" y="890" textLength="91">Männlich</text>
      <text x="2922" y="946" textLength="87">Weiblich</text>
    </svg>
  );
}

// Daily totals and the share with a known onset date, in steps of about 16 cases.
const total = [
  20, 22, 27, 29, 44, 52, 70, 116, 147, 177, 204, 249, 247, 258, 349, 315, 326, 292, 332, 270, 215, 318, 258, 289, 272, 284, 249, 193, 278, 255, 284,
  272, 281, 209, 170, 224, 221, 218, 209, 164, 151, 120, 112, 132, 141, 135, 141, 107, 83, 104, 99, 110, 103, 97, 74, 53, 76, 72, 70, 74, 60, 43, 40,
  53, 56, 59, 57, 54, 40, 30, 45, 44, 39, 48, 40, 48, 34, 27, 42, 34, 48, 27, 32, 28, 24, 32, 40, 36, 32, 27, 25, 16, 20, 25, 34, 32, 28, 27, 20, 14, 24,
  28, 34, 26, 28, 24, 65, 45, 36, 47, 34, 26, 34, 34, 33, 34, 32, 24, 22, 30, 31, 30, 30, 28, 20, 18, 25, 25, 30, 28, 32, 24, 18, 28, 38, 34, 38, 36, 30,
  28, 42, 38, 44, 47, 46, 30, 28, 44, 50, 50, 48, 55, 46, 42, 60, 62, 67, 67, 66, 50, 38, 81, 90, 95, 92, 82, 62, 52, 102, 100, 97, 98, 90, 62, 52, 98,
  100, 95, 90, 84, 60, 52, 84, 93, 88, 90, 95, 72, 62, 103, 102, 112, 103, 100, 90, 78, 118, 126, 130, 130, 128, 98, 75, 129, 126, 135, 138, 145, 120,
  88, 148, 157, 172, 175, 204, 178, 120, 230, 255, 286, 295, 323, 271, 221, 343, 380, 449, 461, 472, 365, 291, 423, 508, 602, 651, 607, 454, 221,
];
const onset = [
  16, 16, 22, 25, 38, 50, 68, 108, 137, 167, 187, 227, 230, 236, 315, 267, 272, 238, 277, 225, 185, 268, 199, 218, 193, 201, 187, 148, 215, 161, 189,
  170, 173, 136, 121, 156, 133, 125, 120, 103, 85, 83, 80, 79, 82, 70, 66, 58, 50, 65, 52, 50, 48, 46, 40, 34, 45, 36, 32, 37, 30, 26, 28, 33, 28, 26,
  24, 24, 20, 20, 22, 20, 18, 20, 16, 22, 10, 20, 12, 20, 11, 14, 10, 10, 16, 14, 16, 12, 10, 8, 10, 12, 11, 12, 10, 10, 6, 12, 14, 12, 11, 10, 10, 10, 10,
  16, 45, 18, 14, 20, 14, 12, 14, 12, 14, 14, 12, 10, 8, 12, 12, 12, 12, 12, 9, 8, 11, 10, 12, 11, 13, 10, 8, 12, 18, 14, 18, 16, 14, 12, 22, 20, 22, 22,
  20, 16, 14, 26, 22, 22, 22, 24, 22, 22, 28, 28, 30, 26, 28, 24, 22, 38, 34, 36, 34, 32, 30, 28, 38, 38, 34, 30, 30, 28, 28, 42, 38, 38, 36, 34, 28, 28,
  38, 45, 40, 38, 40, 34, 38, 52, 54, 53, 53, 50, 50, 50, 72, 66, 64, 60, 58, 50, 52, 75, 70, 70, 66, 72, 66, 56, 90, 90, 90, 94, 110, 105, 100, 152,
  142, 147, 142, 142, 156, 148, 142, 198, 196, 196, 185, 188, 157, 154, 183, 137, 96, 60, 28, 10, 1,
];

function steps(values: number[]) {
  const base = 1933;
  const dayWidth = (3014 - 1997) / values.length;
  const pts = values.map((v, i) => {
    const y = (base - v * 0.7028).toFixed(1);
    return `L${(1997 + i * dayWidth).toFixed(1)} ${y}L${(1997 + (i + 1) * dayWidth).toFixed(1)} ${y}`;
  });
  return `M1997 ${base}${pts.join("")}V${base}Z`;
}

function DailyChart() {
  const ys = [1399, 1488.5, 1577, 1667, 1755.5, 1845];
  const names = ["12.000", "10.000", "8.000", "6.000", "4.000", "2.000"];
  return (
    <svg className="block h-[769px] w-[1224px]" viewBox="1850 1341 1224 769" fontFamily="Lato, sans-serif" fill="#fff" fontSize="23">
      <g stroke="#3a3a3a" strokeWidth="2" strokeDasharray="6 6">
        {ys.map((y) => <path key={y} d={`M1998 ${y}H3012`} />)}
        {[2252.5, 2512.5, 2779].map((x) => <path key={x} d={`M${x} 1399V1932`} />)}
      </g>
      <path d={steps(total)} fill="#e9bd5b" />
      <path d={steps(onset)} fill="#1f4ea5" />
      <path d="M1997 1398V1934M1985 1933H3010M2252.500 1933V1943M2512.500 1933V1943M2779 1933V1943" stroke="#757575" strokeWidth="2" fill="none" />
      {ys.map((y, i) => (
        <g key={y}>
          <path d={`M1985 ${y}H1997`} stroke="#6c6c6c" strokeWidth="2" />
          <text x="1972" y={y + 9} textAnchor="end" textLength={i < 2 ? 68 : 57}>{names[i]}</text>
        </g>
      ))}
      <text x="1972" y="1942" textAnchor="end">0</text>
      <text x="1998" y="1970" textLength="39">Mär</text>
      <text x="2258" y="1970" textLength="36">Mai</text>
      <text x="2518" y="1970" textLength="28">Jul</text>
      <text x="2784" y="1970" textLength="39">Sep</text>
      <circle cx="2280" cy="2042" r="16" fill="#1f4ea5" />
      <circle cx="2538" cy="2042" r="16" fill="#e9bd5b" />
      <text x="2304" y="2053" textLength="188" fontSize="24">Erkrankungsdatum</text>
      <text x="2562" y="2053" textLength="128" fontSize="24">Meldedatum</text>
    </svg>
  );
}

/* ---------- pictures ---------- */

function HubIcons() {
  return (
    <svg className="block h-[70px] w-[428px]" viewBox="30 30 1284 210">
      <rect x="30" y="30" width="214" height="210" fill="#366fbb" />
      <rect x="244" y="30" width="212" height="210" fill="#7f7f7f" />
      <rect x="456" y="30" width="214" height="210" fill="#3b7f7c" />
      <rect x="670" y="30" width="216" height="210" fill="#efa83b" />
      <rect x="886" y="30" width="215" height="210" fill="#666" />
      <rect x="1101" y="30" width="213" height="210" fill="#8c69ae" />
      <path d="M244 30V240M456 30V240M670 30V240M886 30V240M1101 30V240" stroke="#ddd" strokeWidth="3" />
      <g fill="#fff">
        <path d="M58 48C90 47 135 44 147 72C154 92 146 104 138 106C110 110 92 96 84 82C76 66 70 58 58 48Z" />
        <path d="M223 88C212 86 178 92 171 104C168 114 172 120 182 122C204 120 210 104 223 88Z" />
        <path d="M140 98C152 118 158 138 158 170H164C164 145 166 132 178 118L174 114C164 124 162 130 160 138C158 120 152 108 144 96Z" />
        <path d="M42 215L88 178C96 170 104 167 116 167H172C180 168 178 180 170 181H132C126 184 130 195 138 195H176C186 194 190 188 196 178L206 160C212 154 228 150 226 160L204 204C198 213 192 216 182 216H108C96 217 94 227 82 228H46C40 226 40 220 42 215Z" />
        <path fillRule="evenodd" d="M318 52C320 28 372 28 374 52V106L346 141L318 106ZM346 52a17 17 0 1 0 .1 0Z" />
        <path d="M562 217L500 148C470 106 480 60 518 56C540 54 556 62 562 74C570 60 586 54 608 56C646 62 656 104 628 142Z" />
        <path d="M1147 81L1214 41L1277 81Z" />
        <path d="M1147 186L1162 168H1262L1276 186ZM1147 194H1274V201H1147ZM1147 208H1275V240H1147Z" />
        <path d="M1181 142C1186 120 1184 90 1208 87V82H1214V87C1240 92 1236 120 1242 142H1215V156H1208V142Z" />
        <path fillRule="evenodd" d="M946 88H1091V100H1078V147H1062V136H1040L1038 100H946ZM1055 98a11 11 0 1 0 .1 0Z" />
        <path fillRule="evenodd" d="M891 154H1065V168H1052V227H1026V214H932V227H906V168H891ZM932 167a14 14 0 1 0 .1 0ZM1025 167a14 14 0 1 0 .1 0Z" />
        <path d="M318 194h14v14h-14zM425 194h14v14h-14z" />
      </g>
      <g fill="none" stroke="#fff" strokeWidth="5">
        <path d="M302 187L346 158L390 187M310 186V226H346V204H358V226H384V186M316 174V156H326V168" />
        <path d="M246 162L283 187M278 186V226H244M262 226V204H246" />
        <path d="M454 162L410 187M416 186V226H454M424 174V156H434V168M446 226V204H454" />
        <path d="M456 133H500" />
        <path d="M834 30V57H861V85H807V118H670M794 118V170H848V204H886M794 170H788V204H760V220L742 240" />
        <path d="M670 146L698 120M670 172L724 120M670 198L750 120M670 222L776 120M682 236L790 130M708 238L790 156M734 238L788 182" strokeWidth="6" />
        <path d="M1166 82V170M1258 82V170" strokeWidth="8" />
        <path d="M966 88L984 43H1052L1070 88" />
        <path d="M920 154L936 105H1030L1036 154" />
      </g>
      <path d="M494 133H530L543 168L556 78L565 133H594" fill="none" stroke="#3b7f7c" strokeWidth="6" />
      <circle cx="603" cy="130" r="14" fill="#3b7f7c" />
    </svg>
  );
}

function RkiLogo() {
  return (
    <svg className="block h-[96px] w-[344px] bg-white" viewBox="684 2078 344 96">
      <text x="692" y="2101" textLength="327" fontSize="24" fill="#1166b5" stroke="#1166b5" strokeWidth=".5" fontFamily="'Liberation Serif', serif">ROBERT KOCH INSTITUT</text>
      <g fill="none">
        <path d="M870 2128C880 2150 910 2150 932 2126M872 2146C890 2138 890 2126 902 2120M968 2120C980 2150 990 2152 990 2160M1002 2116C985 2120 975 2150 962 2158" stroke="#cfd6ee" strokeWidth="4" />
        <path d="M900 2156C925 2168 942 2136 964 2120M900 2126C920 2108 944 2120 966 2152" stroke="#1166b5" strokeWidth="4" />
        <path d="M899 2118V2160M965 2118V2160" stroke="#2c80cc" strokeWidth="2" />
      </g>
    </svg>
  );
}

function BonnLogo() {
  return (
    <svg className="block h-[96px] w-[350px] bg-white" viewBox="1036 2078 350 96">
      <rect x="1183" y="2082" width="90" height="58" fill="#8f8f82" />
      <path d="M1183 2082H1243C1236 2108 1215 2128 1183 2134Z" fill="#fff" />
      <path d="M1183 2082H1238C1232 2106 1212 2124 1183 2128Z" fill="#23559f" />
      <rect x="1183" y="2145" width="90" height="24" fill="#edb63c" />
      <text x="1040" y="2165" textLength="138" fontSize="24" fill="#8f8f82" fontFamily="Lato, sans-serif">UNIVERSITÄT</text>
      <text x="1187" y="2165" textLength="62" fontSize="22" fontWeight="700" fill="#fff" fontFamily="Lato, sans-serif">BONN</text>
      <clipPath id="ball"><circle cx="1317" cy="2114" r="32" /></clipPath>
      <g clipPath="url(#ball)">
        <rect x="1284" y="2080" width="66" height="68" fill="#c5c9e8" />
        <path d="M1284 2102q8 -8 16 -2t16 2t18 -2t18 2V2150H1284Z" fill="#8b97d2" />
        <path d="M1284 2112q8 -8 16 -2t16 2t18 -2t18 2V2130H1284Z" fill="#5870bd" />
        <path d="M1284 2134q8 -8 16 -2t16 2t18 -2t18 2V2150H1284Z" fill="#a9b1de" />
      </g>
      <g fontSize="30" fontFamily="'Open Sans', sans-serif">
        <text x="1309" y="2138" fill="#fff">ih</text>
        <text x="1334" y="2138" fill="#23252e">ph</text>
      </g>
      <g fontSize="8.500" fill="#444" fontFamily="'Liberation Sans', sans-serif">
        <text x="1284" y="2157" textLength="96">Institut für Hygiene und</text>
        <text x="1284" y="2168" textLength="92">Öffentliche Gesundheit</text>
      </g>
    </svg>
  );
}

function EsriLogo() {
  return (
    <svg className="block h-[96px] w-[348px] bg-white" viewBox="1392 2078 348 96">
      <circle cx="1446" cy="2126" r="34" fill="#fff" stroke="#000" strokeWidth="2.500" />
      <path d="M1422 2108C1426 2098 1440 2094 1448 2096L1456 2102L1446 2108L1440 2118L1430 2122L1418 2122ZM1424 2134C1434 2130 1444 2136 1450 2142L1442 2154L1436 2156L1434 2146ZM1452 2108C1462 2100 1474 2106 1478 2122C1478 2136 1474 2144 1466 2150L1460 2134L1448 2126L1446 2116Z" fill="#000" />
      <path d="M1414 2118C1436 2132 1460 2132 1480 2120M1418 2146C1440 2154 1456 2152 1474 2144M1446 2092C1426 2106 1424 2146 1444 2160M1438 2092C1462 2102 1470 2142 1452 2160" fill="none" stroke="#000" strokeWidth="1.500" />
      <text x="1490" y="2148" textLength="126" fontSize="66" fontWeight="700" fill="#000" fontFamily="'Open Sans', sans-serif" lengthAdjust="spacingAndGlyphs">esri</text>
      <path d="M1637.500 2090V2150" stroke="#222" strokeWidth="2" />
      <g fontSize="14.500" fontWeight="700" fill="#111" fontFamily="Lato, sans-serif">
        <text x="1656" y="2103" textLength="30">THE</text>
        <text x="1656" y="2118" textLength="65">SCIENCE</text>
        <text x="1656" y="2133" textLength="21">OF</text>
        <text x="1656" y="2148" textLength="55">WHERE</text>
      </g>
    </svg>
  );
}

/* ---------- page ---------- */

const panel = "border-2 border-[#353535] bg-[#222]";

function Tab({ active, w, tw, children }: { active?: boolean; w: "a" | "b" | "c" | "d"; tw: number; children: ReactNode }) {
  const widths = { a: "w-[506px]", b: "w-[329px]", c: "w-[258px]", d: "w-[482px]" };
  return (
    <div
      className={`flex items-center justify-center border-x-2 border-b-4 text-[26px] leading-[34px] ${widths[w]} ${
        active ? "relative -mt-[2px] h-[56px] border-x-[#353535] border-b-[#4a90e2] bg-[#222] pt-[2px]" : "h-[54px] border-[#353535] bg-black"
      }`}
    >
      <Line w={tw}>{children}</Line>
    </div>
  );
}

export default function App() {
  return (
    <div className="relative h-[2322px] w-[3088px] overflow-hidden bg-black pt-[14px] font-[Lato,sans-serif] text-white">
      <header className={`mr-[12px] ml-[10px] flex h-[128px] justify-between pr-[22px] pl-[28px] ${panel}`}>
        <div className="flex flex-col items-start pt-[11px]">
          <h1 className="text-[48px] leading-[56px]"><Line w={934}>Robert Koch-Institut: COVID-19-Dashboard</Line></h1>
          <p className="mt-[8px] text-[28px] leading-[36px]">
            <Line w={1292}>Auswertungen basierend auf den aus den Gesundheitsämtern gemäß IfSG übermittelten Meldedaten</Line>
          </p>
        </div>
        <div className="flex items-start">
          <span className="mt-[53px] text-[32px] leading-[40px]"><Line w={204}>Bundesländer</Line></span>
          <div className="mt-[34px] ml-[59px] flex h-[80px] w-[324px] items-center justify-center rounded-full bg-[#3d82a6] pb-[3px] text-[32px] leading-[40px]">
            <Line w={158}>Landkreise</Line>
          </div>
          <div className="mt-[30px] ml-[180px] flex h-[64px] w-[330px] items-center justify-between border-2 border-[#555] pr-[14px] pl-[8px] text-[28px] leading-[60px] text-[#aaa]">
            <Line w={221}>Alle Bundesländer</Line>
            <svg className="h-[16px] w-[30px]" viewBox="0 0 30 16" fill="none" stroke="#555" strokeWidth="2"><path d="M3 2H27L15 14Z" /></svg>
          </div>
          <div className="mt-[44px] ml-[49px] flex w-[37px] flex-col gap-[10px]">
            <i className="h-[4px] bg-white" /><i className="h-[4px] bg-white" /><i className="h-[4px] bg-white" />
          </div>
        </div>
      </header>

      <main className="mt-[20px] ml-[24px] flex gap-[20px]">
        {/* left column */}
        <div className="flex w-[568px] shrink-0 flex-col gap-[20px]">
          <section className={`relative flex h-[1888px] flex-col items-center pt-[25px] ${panel}`}>
            <h2 className="text-[32px] leading-[40px] font-bold"><Line w={335}>Auswahl pro Landkreis</Line></h2>
            <p className="mt-[14px] flex font-['Liberation_Sans',sans-serif] text-[20px] leading-[24px]">
              <b>(</b>
              <Line w={129} className="text-[#5bc2fb]">Covid-19-Fälle</Line>
              <b className="mx-[5px]">|</b>
              <Line w={94} className="text-[#5c5c5c]">Todesfälle</Line>
              <b>)</b>
            </p>
            <div className="mt-[19px] flex h-[1762px] w-full overflow-hidden">
              <ul className="w-[550px] shrink-0">
                {rows.map((r) => <ListRow key={r[0]} row={r} />)}
              </ul>
              <div className="h-[1762px] w-[14px] bg-[#404040]"><div className="h-[102px] bg-[#5c5c5c]" /></div>
            </div>
            <svg className="absolute -top-[12px] -right-[18px] h-[36px] w-[36px]" viewBox="0 0 36 36" fill="none">
              <circle cx="18" cy="18" r="17" fill="#333" stroke="#8f8f8f" strokeWidth="2" />
              <path d="M9.500 15V9.500H15M21 9.500H26.500V15M26.500 21V26.500H21M15 26.500H9.500V21M10 10L15.500 15.500M26 10L20.500 15.500M26 26L20.500 20.500M10 26L15.500 20.500" stroke="#b5b5b5" strokeWidth="1.800" />
            </svg>
          </section>
          <section className={`flex h-[238px] flex-col ${panel}`}>
            <h2 className="flex h-[129px] justify-center border-b-2 border-[#353535] pt-[25px] text-[32px] leading-[40px] font-bold"><Line w={171}>Datenstand</Line></h2>
            <div className="flex flex-1">
              <p className="flex flex-1 justify-center pt-[7px] pl-[10px] text-[28px] leading-[40px]"><Line w={284}>26.10.2020, 00:00 Uhr</Line></p>
              <div className="w-[14px] bg-[#404040]"><div className="h-[98px] bg-[#5c5c5c]" /></div>
            </div>
          </section>
        </div>

        {/* middle column */}
        <div className="w-[1216px] shrink-0">
          <section className={`h-[1826px] ${panel}`}>
            <h2 className="flex h-[64px] justify-center pt-[9px] text-[32px] leading-[40px] font-bold"><Line w={813}>COVID-19-Fälle der letzten 7 Tage/100.000 Einwohner</Line></h2>
            <MapView />
          </section>
          <div className="flex gap-[11px] pl-[26px]">
            <Tab active w="a" tw={456}>Aktivität über 7 Tage/100.000 Einwohner</Tab>
            <Tab w="b" tw={281}>Fälle/100.000 Einwohner</Tab>
          </div>
          <section className={`mt-[24px] flex h-[242px] justify-between ${panel}`}>
            <div>
              <div className="mt-[10px] ml-[70px] flex">
                <RkiLogo />
                <div className="ml-[8px]"><BonnLogo /></div>
                <div className="ml-[6px]"><EsriLogo /></div>
              </div>
              <h2 className="mt-[33px] ml-[10px] font-['Liberation_Sans',sans-serif] text-[44px] leading-[46px] font-bold text-[#d6d6d6]">
                <Line w={754}>Datenschutzerklärung &amp; Impressum</Line>
              </h2>
            </div>
            <div className="w-[14px] bg-[#404040]"><div className="h-[32px] bg-[#5c5c5c]" /></div>
          </section>
        </div>

        {/* right column */}
        <div className="w-[1228px] shrink-0">
          <div className="flex h-[356px] gap-[20px]">
            <section className={`w-[292px] ${panel}`}>
              <div className="flex h-[198px] flex-col items-center pt-[36px]">
                <span className="text-[28px] leading-[34px]"><Line w={204}>COVID-19-Fälle</Line></span>
                <span className="text-[54px] leading-[60px] font-bold text-[#5bc2fb]"><Line w={206}>437.866</Line></span>
                <span className="mt-[1px] text-[26px] leading-[34px] text-[#3d82a6]"><Line w={204}>aus total 437.866</Line></span>
              </div>
              <div className="flex flex-col items-center border-t-2 border-[#353535] pt-[19px]">
                <span className="text-[58px] leading-[64px] font-black text-[#d89a35]"><Line w={204}>+ 8.685</Line></span>
                <span className="mt-[4px] text-[40px] leading-[44px]"><Line w={204}>zum Vortag</Line></span>
              </div>
            </section>
            <section className={`w-[292px] ${panel}`}>
              <div className="flex h-[198px] flex-col items-center pt-[32px]">
                <span className="text-[21px] leading-[26px]"><Line w={203}>COVID-19-Todesfälle</Line></span>
                <span className="mt-[7px] text-[64px] leading-[64px] font-bold text-[#d6d6d6]"><Line w={206}>10.056</Line></span>
                <span className="mt-[4px] text-[27px] leading-[34px] text-[#858585]"><Line w={203}>aus total 10.056</Line></span>
              </div>
              <div className="flex flex-col items-center border-t-2 border-[#353535] pt-[5px]">
                <span className="text-[83px] leading-[90px] font-black text-[#858585]"><Line w={178}>+ 24</Line></span>
                <span className="mt-[8px] text-[41px] leading-[46px]"><Line w={203}>zum Vortag</Line></span>
              </div>
            </section>
            <section className={`flex w-[604px] flex-col items-center pt-[10px] text-[25px] leading-[34px] ${panel}`}>
              <Line w={554}>Kombination, Analyse &amp; Kommunikation relevanter</Line>
              <Line w={255}>Daten zum Coronavirus</Line>
              <span className="mt-[18px] text-[#4a90e2]"><Line w={425}>Erkunden Sie den NPGEO Corona Hub</Line></span>
              <div className="mt-[38px]"><HubIcons /></div>
            </section>
          </div>

          <section className={`mt-[20px] flex h-[620px] flex-col ${panel}`}>
            <h2 className="flex justify-center pt-[26px] font-['Liberation_Sans',sans-serif] text-[33px] leading-[40px] font-bold">
              <Line w={771}>COVID-19-Fälle nach Altersgruppe und Geschlecht</Line>
            </h2>
            <div className="mt-[34px]"><AgeChart /></div>
          </section>
          <div className="flex gap-[10px] pl-[26px]">
            <Tab active w="c" tw={207}>Fälle Altersgruppe</Tab>
            <Tab w="d" tw={434}>Fälle Altersgruppe/100.000 Einwohner</Tab>
          </div>

          <section className={`mt-[24px] flex h-[1014px] flex-col ${panel}`}>
            <h2 className="flex justify-center pt-[23px] text-[32px] leading-[40px] font-bold">
              <Line w={1076}>COVID-19-Fälle/Tag nach <span className="underline decoration-2 underline-offset-4">Erkrankungsbeginn</span>, ersatzweise Meldedatum*</Line>
            </h2>
            <p className="mt-[7px] flex justify-center text-[26px] leading-[34px] font-bold text-[#d6d6d6]"><Line w={444}>(Übermittlungsverzug, siehe Disclaimer)</Line></p>
            <div className="-mt-[1px]"><DailyChart /></div>
            <div className="mt-[4px] flex flex-col items-start pl-[10px] font-['Liberation_Sans',sans-serif] text-[24px] leading-[42px] text-[#c4c4c4]">
              <Line w={1140}>* Bei Fällen ohne Angaben zum Erkrankungsbeginn (Erkrankungsbeginn unbekannt bzw. Fälle ohne Symptome) wird</Line>
              <Line w={1138}>ersatzweise das Meldedatum verwendet. Die abnehmende Fallzahl über die letzten Tage kann durch den Melde- und</Line>
              <Line w={331}>Übermittlungsverzug bedingt sein.</Line>
            </div>
          </section>
          <div className="relative -mt-[2px] ml-[20px] flex h-[58px] w-[1186px] justify-between border-x-2 border-b-2 border-[#353535] bg-[#222] px-[22px] text-[26px] leading-[51px]">
            <svg className="mt-[16px] h-[26px] w-[14px]" viewBox="0 0 14 26" fill="none" stroke="#fff" strokeWidth="2"><path d="M12.500 2V24L1.500 13Z" /></svg>
            <Line w={252}>Fälle/Tag (Erkrankung)</Line>
            <svg className="mt-[16px] h-[26px] w-[14px]" viewBox="0 0 14 26" fill="none" stroke="#fff" strokeWidth="2"><path d="M1.500 2V24L12.500 13Z" /></svg>
          </div>
        </div>
      </main>

      {/* collapsed side panel handle */}
      <div className="absolute top-[1036px] left-0 flex h-[400px] w-[18px] items-center border-2 border-l-0 border-[#353535] bg-[#222]">
        <svg className="h-[24px] w-[11px]" viewBox="0 0 11 24" fill="none" stroke="#4a90e2" strokeWidth="2"><path d="M0 1L9.500 12L0 23" /></svg>
      </div>
    </div>
  );
}
